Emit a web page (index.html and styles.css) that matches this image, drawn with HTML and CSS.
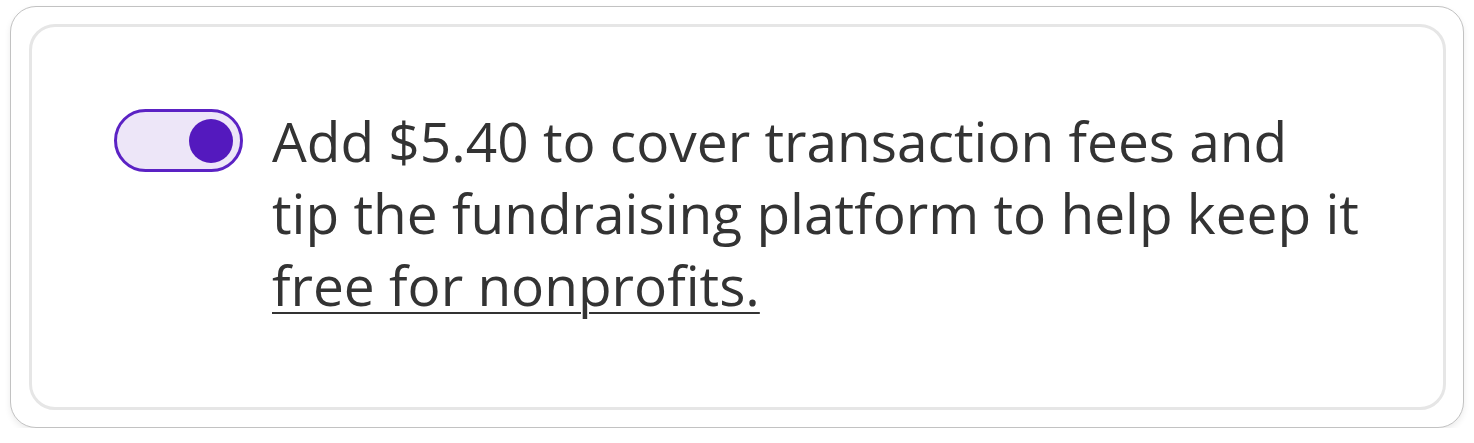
FILE: index.html
```html
<!DOCTYPE html>
<html lang="en">
<head>
<meta charset="utf-8">
<title>Cover fees</title>
<link rel="stylesheet" href="styles.css">
</head>
<body>
<div class="outer">
  <div class="inner">
    <div class="row">
      <button class="toggle" type="button" aria-pressed="true"><span class="knob"></span></button>
      <p class="text">Add $5.40 to cover transaction fees and<br>tip the fundraising platform to help keep it <a class="link" href="#">free for nonprofits.</a></p>
    </div>
  </div>
</div>
</body>
</html>
```
FILE: styles.css
```css
* { box-sizing: border-box; }
html, body { margin: 0; padding: 0; background: #ffffff; }
body { padding: 6px 10px 0 10px; font-family: "Open Sans", "Noto Sans", sans-serif; }
.outer {
  width: 1454px;
  height: 422px;
  border: 1.5px solid #c2c2c2;
  border-radius: 26px;
  box-shadow: 0 3px 6px rgba(0,0,0,0.08);
  padding: 17px 17px 17px 18px;
  background: #fff;
}
.inner {
  height: 100%;
  border: 3px solid #e6e6e6;
  border-radius: 26px;
  padding: 82px 20px 0 82px;
}
.row { display: flex; align-items: flex-start; gap: 29px; }
.toggle {
  flex: 0 0 auto;
  width: 129px;
  height: 63px;
  border: 3px solid #5b22c4;
  border-radius: 32px;
  background: #ede6f8;
  padding: 0 7px 0 0;
  display: flex;
  align-items: center;
  justify-content: flex-end;
  margin: 0;
}
.knob { width: 44px; height: 44px; border-radius: 50%; background: #5419be; display: block; }
.text {
  margin: -4px 0 0 0;
  width: 1120px;
  font-size: 55px;
  line-height: 72px;
  color: #333333;
  font-variant-ligatures: none;
}
.link { color: #333333; text-decoration: underline; text-decoration-thickness: 2px; text-underline-offset: 6px; }
```
